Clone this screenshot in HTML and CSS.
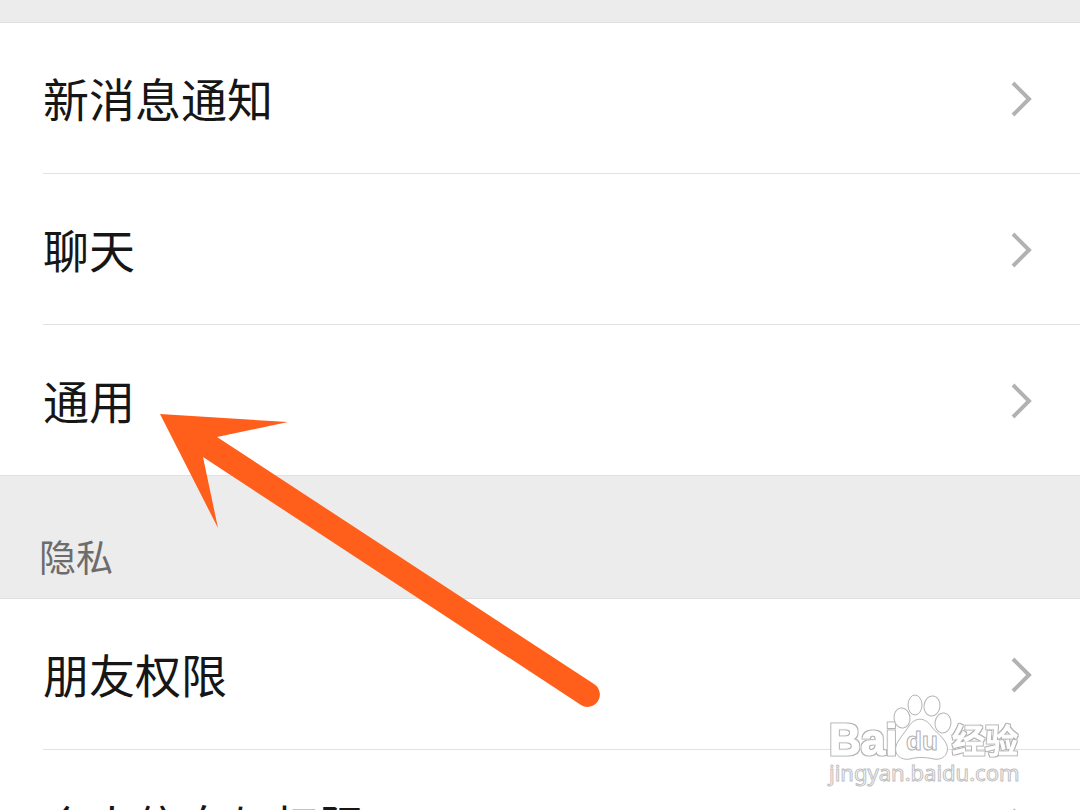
FILE: index.html
```html
<!DOCTYPE html>
<html lang="zh-CN">
<head>
  <meta charset="UTF-8" />
  <meta name="viewport" content="width=device-width, initial-scale=1.0"/>
  <title>设置</title>
  <link rel="stylesheet" href="styles.css">
</head>
<body>
  <svg width="0" height="0" class="sprite">
    <symbol id="chevron" viewBox="0 0 24 40">
      <path d="M3 4 L19 20 L3 36" fill="none" stroke="#b2b2b2" stroke-width="4"/>
    </symbol>
    <!-- thin grey rim around white shapes -->
    <filter id="rim" x="-10%" y="-10%" width="120%" height="120%">
      <feMorphology in="SourceAlpha" operator="dilate" radius="1" result="fat"/>
      <feFlood flood-color="#b4b4b4"/>
      <feComposite in2="fat" operator="in" result="edge"/>
      <feMerge>
        <feMergeNode in="edge"/>
        <feMergeNode in="SourceGraphic"/>
      </feMerge>
    </filter>
  </svg>

  <main class="settings">
    <nav class="group">
      <a class="row" href="#notify"><span class="label">新消息通知</span><svg class="chevron"><use href="#chevron"/></svg></a>
      <a class="row" href="#chat"><span class="label">聊天</span><svg class="chevron"><use href="#chevron"/></svg></a>
      <a class="row" href="#general"><span class="label">通用</span><svg class="chevron"><use href="#chevron"/></svg></a>
    </nav>

    <h2 class="section-title">隐私</h2>

    <nav class="group">
      <a class="row" href="#friends"><span class="label">朋友权限</span><svg class="chevron"><use href="#chevron"/></svg></a>
      <a class="row" href="#personal"><span class="label">个人信息与权限</span><svg class="chevron"><use href="#chevron"/></svg></a>
    </nav>

    <!-- arrow pointing at the 通用 row -->
    <svg class="pointer" viewBox="0 0 442 296" aria-hidden="true">
      <path fill="#ff5f1a" d="M0 0 L128 8 L57 23 L434 270 A12 12 0 0 1 421 291 L43 43 L58 114 Z"/>
    </svg>

    <!-- watermark -->
    <svg class="watermark" viewBox="0 0 200 100">
      <g class="rimmed">
        <text class="brand" x="1" y="61">Bai</text>
        <text class="cn" x="124" y="59">经验</text>
      </g>
      <g class="paw">
        <path d="M81 32 C87 23 97 23 103 32 C107 38 112 40 116 46 C124 56 117 67 106 65 C97 63 89 63 82 65 C70 67 63 57 71 46 C75 40 77 38 81 32 Z"/>
        <ellipse cx="74" cy="24" rx="8" ry="10" transform="rotate(-8 74 24)"/>
        <ellipse cx="87" cy="11" rx="7" ry="10"/>
        <ellipse cx="104" cy="12" rx="8" ry="10" transform="rotate(8 104 12)"/>
        <ellipse cx="115" cy="29" rx="8" ry="10" transform="rotate(8 115 29)"/>
      </g>
      <text class="du" x="78" y="56">du</text>
      <text class="site" x="1" y="87">jingyan.baidu.com</text>
    </svg>
  </main>
</body>
</html>
```

FILE: styles.css
```css
* {
  box-sizing: border-box;
}

body {
  margin: 0;
  height: 100vh;
  overflow: hidden;
  background: #fff;
  color: #161616;
  font-family: "Noto Sans CJK SC", sans-serif;
}

.sprite {
  position: absolute;
}

.settings {
  position: relative;
  height: 100%;
  overflow: hidden;
  border-top: 22px solid #ececec;
}

.group {
  border-top: 1px solid #e0e0e0;
  background: #fff;
}

.row {
  display: flex;
  align-items: center;
  justify-content: space-between;
  height: 151px;
  margin-left: 43px;
  padding: 2px 46px 0 0;
  border-bottom: 1px solid #e2e2e2;
  color: inherit;
  font-size: 46px;
  line-height: 64px;
  text-decoration: none;
}

.row:last-child {
  height: 150px;
  border-bottom: none;
}

.label {
  padding-bottom: 4px;
}

.chevron {
  width: 24px;
  height: 40px;
}

.section-title {
  margin: 0;
  padding: 56px 39px 18px;
  border-top: 1px solid #e0e0e0;
  background: #ececec;
  color: #6c6c6c;
  font-size: 37px;
  font-weight: 400;
  line-height: 48px;
}

.pointer {
  position: absolute;
  left: 160px;
  top: 392px;
  width: 442px;
  height: 296px;
}

.watermark {
  position: absolute;
  right: 52px;
  top: 672px;
  width: 200px;
  height: 100px;
  overflow: visible;
}

.rimmed {
  fill: #fff;
  stroke: #fff;
  stroke-width: 1;
  filter: url(#rim);
}

.paw {
  fill: #fff;
  stroke: #b4b4b4;
  stroke-width: 1;
}

.brand {
  font: bold 44px "Liberation Sans", sans-serif;
}

.cn {
  font: 500 33px "Noto Sans CJK SC", sans-serif;
}

.du {
  fill: #fff;
  stroke: #b0b0b0;
  stroke-width: 1;
  font: bold 26px "Liberation Sans", sans-serif;
}

.site {
  fill: #fff;
  stroke: #c0c0c0;
  stroke-width: 1;
  font: 22px "Noto Sans", sans-serif;
}
```
